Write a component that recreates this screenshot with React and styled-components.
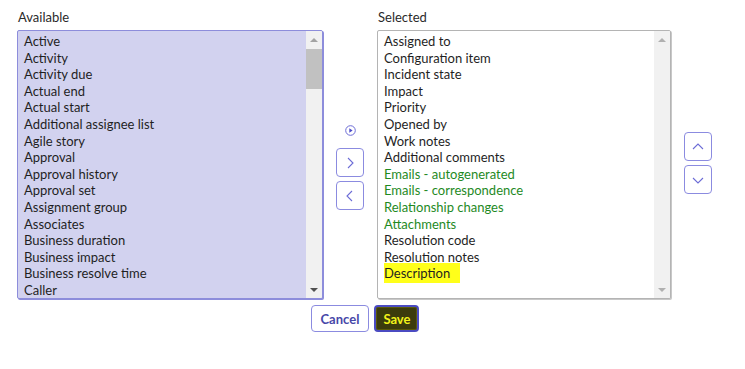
import React from 'react';
import styled, { createGlobalStyle } from 'styled-components';

const GlobalStyle = createGlobalStyle`
  body {
    margin: 0;
    background: #ffffff;
    font-family: Lato, "Open Sans", "Liberation Sans", sans-serif;
    color: #1f1f1f;
  }
`;

const Page = styled.div`
  width: 696px;
  padding: 8px 0 0 17px;
`;

const Columns = styled.div`
  display: flex;
  align-items: flex-start;
  gap: 13px;
`;

const Column = styled.div`
  display: flex;
  flex-direction: column;
  gap: 4px;
  width: ${p => p.width}px;
`;

const Label = styled.div`
  font-size: 13px;
  line-height: 17px;
  color: #2a2a2a;
  padding: 1px 0 0 1px;
`;

const ListBox = styled.div`
  box-sizing: border-box;
  height: 269px;
  display: flex;
  border: 1px solid ${p => (p.active ? '#8d8ddb' : '#b4b4b4')};
  border-radius: 2px;
  background: ${p => (p.active ? '#d2d2ef' : '#ffffff')};
  box-shadow: ${p => (p.active ? '1px 1px 0 #8d8ddb' : '1px 1px 0 #c8c8c8')};
  overflow: hidden;
`;

const Items = styled.ul`
  flex: 1;
  margin: 0;
  padding: 2px 0 0 6px;
  list-style: none;
  overflow: hidden;
`;

const Item = styled.li`
  font-size: 13px;
  line-height: 16.6px;
  white-space: nowrap;
  color: ${p => (p.green ? '#1f8a1f' : '#1f1f1f')};

  span {
    background: ${p => (p.marked ? '#ffff1a' : 'transparent')};
    padding: ${p => (p.marked ? '2px 10px 2px 0' : '0')};
  }
`;

const Track = styled.div`
  width: 16px;
  display: flex;
  flex-direction: column;
  align-items: center;
  background: #f1f1f1;
`;

const Arrow = styled.div`
  height: 17px;
  width: 16px;
  display: flex;
  align-items: center;
  justify-content: center;

  &::before {
    content: '';
    border-left: 4px solid transparent;
    border-right: 4px solid transparent;
    ${p => (p.down ? 'border-top' : 'border-bottom')}: 4px solid ${p => (p.dim ? '#b0b0b0' : p.down ? '#505050' : '#a3a3a3')};
  }
`;

const Thumb = styled.div`
  width: 16px;
  height: 40px;
  margin-top: 1px;
  background: #c1c1c1;
`;

const Spacer = styled.div`
  flex: 1;
`;

const Controls = styled.div`
  display: flex;
  flex-direction: column;
  align-items: center;
  gap: 4px;
  width: 28px;
  padding-top: ${p => p.top}px;
`;

const PlayDot = styled.div`
  width: 11px;
  height: 11px;
  margin-bottom: 8px;
  display: flex;
`;

const IconButton = styled.button`
  box-sizing: border-box;
  width: 28px;
  height: 29px;
  padding: 0;
  display: flex;
  align-items: center;
  justify-content: center;
  border: 1px solid #8b8be0;
  border-radius: 4px;
  background: #ffffff;
  cursor: pointer;
`;

const Footer = styled.div`
  display: flex;
  justify-content: center;
  gap: 5px;
  margin-top: 6px;
`;

const Button = styled.button`
  box-sizing: border-box;
  height: 27px;
  padding: 0 ${p => (p.primary ? '7px' : '9px')};
  font-family: Lato, "Open Sans", "Liberation Sans", sans-serif;
  font-size: 13px;
  font-weight: 700;
  border-radius: 4px;
  border: ${p => (p.primary ? '2px solid #4b4bc2' : '1px solid #8b8be0')};
  background: ${p => (p.primary ? '#3b3b0c' : '#ffffff')};
  color: ${p => (p.primary ? '#f2f21a' : '#4747a8')};
  box-shadow: ${p => (p.primary ? 'inset 0 0 0 1px #5a5a0a' : 'none')};
  cursor: pointer;
`;

const Chevron = ({ dir }) => {
  const paths = {
    right: 'M4 1 L9 6 L4 11',
    left: 'M8 1 L3 6 L8 11',
    up: 'M1 8 L6 3 L11 8',
    down: 'M1 4 L6 9 L11 4',
  };
  return (
    <svg width="12" height="12" viewBox="0 0 12 12">
      <path d={paths[dir]} fill="none" stroke="#6c6cd6" strokeWidth="1.1" />
    </svg>
  );
};

const available = [
  'Active', 'Activity', 'Activity due', 'Actual end', 'Actual start',
  'Additional assignee list', 'Agile story', 'Approval', 'Approval history',
  'Approval set', 'Assignment group', 'Associates', 'Business duration',
  'Business impact', 'Business resolve time', 'Caller',
];

const selected = [
  { t: 'Assigned to' },
  { t: 'Configuration item' },
  { t: 'Incident state' },
  { t: 'Impact' },
  { t: 'Priority' },
  { t: 'Opened by' },
  { t: 'Work notes' },
  { t: 'Additional comments' },
  { t: 'Emails - autogenerated', green: true },
  { t: 'Emails - correspondence', green: true },
  { t: 'Relationship changes', green: true },
  { t: 'Attachments', green: true },
  { t: 'Resolution code' },
  { t: 'Resolution notes' },
  { t: 'Description', marked: true },
];

export default function App() {
  return (
    <Page>
      <GlobalStyle />
      <Columns>
        <Column width={306}>
          <Label>Available</Label>
          <ListBox active>
            <Items>
              {available.map(name => (
                <Item key={name}><span>{name}</span></Item>
              ))}
            </Items>
            <Track>
              <Arrow />
              <Thumb />
              <Spacer />
              <Arrow down />
            </Track>
          </ListBox>
        </Column>

        <Controls top={117}>
          <PlayDot>
            <svg width="11" height="11" viewBox="0 0 11 11">
              <circle cx="5.5" cy="5.5" r="4.8" fill="none" stroke="#6c6cd6" strokeWidth="1" />
              <path d="M4.3 3.3 L7.6 5.5 L4.3 7.7 Z" fill="#4a4ac8" />
            </svg>
          </PlayDot>
          <IconButton><Chevron dir="right" /></IconButton>
          <IconButton><Chevron dir="left" /></IconButton>
        </Controls>

        <Column width={294}>
          <Label>Selected</Label>
          <ListBox>
            <Items>
              {selected.map(s => (
                <Item key={s.t} green={s.green} marked={s.marked}><span>{s.t}</span></Item>
              ))}
            </Items>
            <Track>
              <Arrow dim />
              <Spacer />
              <Arrow down dim />
            </Track>
          </ListBox>
        </Column>

        <Controls top={124}>
          <IconButton><Chevron dir="up" /></IconButton>
          <IconButton><Chevron dir="down" /></IconButton>
        </Controls>
      </Columns>

      <Footer>
        <Button>Cancel</Button>
        <Button primary>Save</Button>
      </Footer>
    </Page>
  );
}
